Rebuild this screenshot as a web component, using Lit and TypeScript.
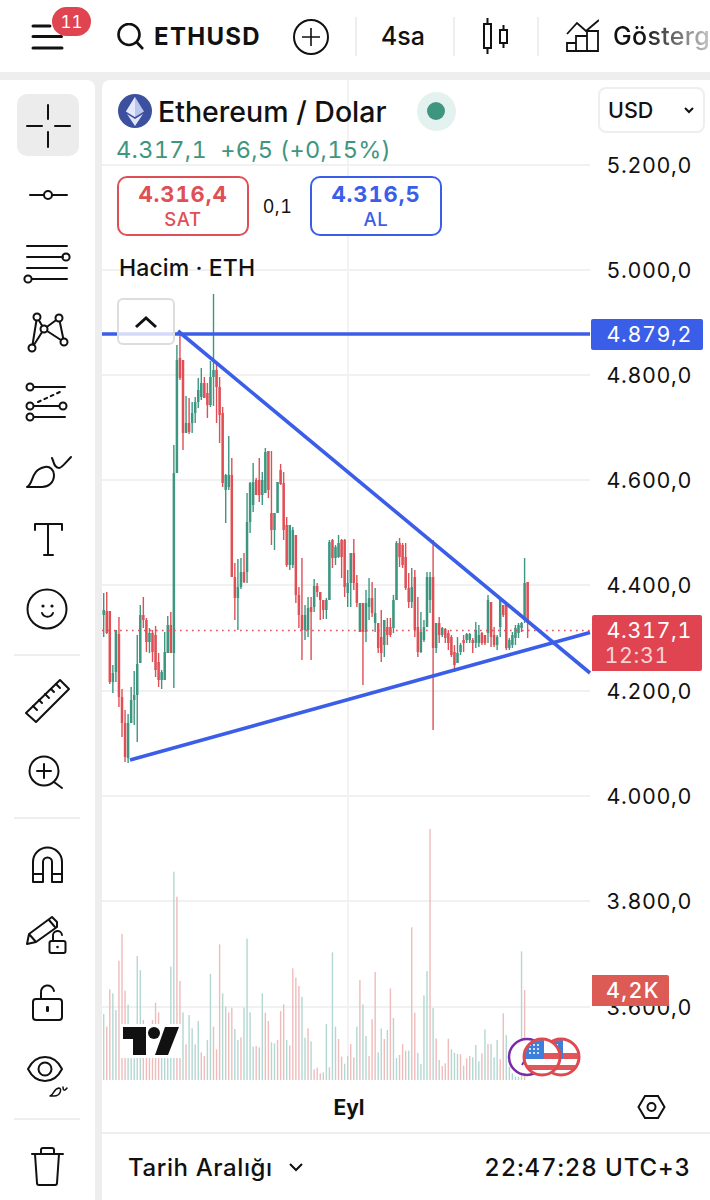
import { LitElement, html, css, svg } from "lit";
import { customElement } from "lit/decorators.js";

// [green?, high, low, bodyTop, bodyBottom] in page pixels
const C: number[][] = [
[1,593,637,610,615],[0,592,634,611,633],[0,611,684,611,682],[1,665,693,673,682],[1,630,682,630,672],[0,617,707,634,697],[0,689,737,697,723],[0,710,762,723,757],[1,714,763,723,758],[1,687,723,700,723],
[1,671,725,695,700],[1,635,742,664,695],[1,605,663,615,663],[0,597,628,615,620],[0,618,652,620,642],[1,628,653,633,642],[0,630,662,633,652],[0,626,677,635,670],[0,653,687,662,680],[1,670,689,672,680],
[1,632,680,652,680],[1,616,653,625,653],[0,612,653,625,653],[1,445,688,473,653],[1,345,473,360,473],[0,332,380,358,378],[0,360,450,360,433],[1,396,433,423,433],[0,398,434,423,432],[1,402,433,413,423],
[1,397,423,402,413],[1,378,408,390,402],[1,368,400,383,397],[0,377,398,383,398],[0,383,418,393,405],[1,361,407,377,405],[1,294,406,370,377],[0,365,423,370,387],[0,377,443,387,415],[0,407,487,413,483],
[1,474,523,475,490],[1,436,490,475,487],[0,458,577,475,577],[0,563,620,577,598],[1,559,630,587,598],[1,558,589,572,587],[0,553,583,572,582],[1,493,583,522,572],[1,482,533,483,522],[1,463,512,482,505],
[0,478,495,480,495],[0,458,502,480,495],[1,472,505,480,495],[1,448,493,452,493],[0,451,498,451,490],[0,451,545,513,530],[1,513,550,513,530],[1,482,513,482,513],[0,464,485,470,484],[0,472,540,483,530],
[0,517,567,525,565],[1,525,570,525,565],[1,527,568,530,565],[0,535,603,535,595],[0,587,628,595,615],[0,558,660,615,630],[1,605,640,615,630],[1,597,637,608,630],[0,597,660,607,612],[1,579,612,586,607],
[0,583,597,586,592],[0,592,620,592,600],[0,600,619,600,610],[1,598,619,600,610],[1,540,600,542,600],[0,539,568,540,558],[1,545,565,547,558],[1,535,558,543,557],
[0,539,578,540,557],[0,539,597,540,587],[1,570,607,583,593],[1,553,607,553,583],[0,539,590,553,583],[0,575,607,583,603],[1,603,632,603,632],[0,603,685,603,632],[1,590,642,603,632],[1,578,620,598,607],
[0,582,617,598,613],[1,588,632,613,623],[0,623,653,623,648],[0,610,662,637,653],[1,620,657,620,645],[0,618,645,627,635],[0,618,637,627,635],[1,595,633,600,628],[1,541,600,543,600],[0,538,567,543,557],
[0,543,568,545,565],[0,543,590,557,588],[0,573,608,588,602],[1,568,608,587,602],[0,570,637,577,630],[0,597,657,627,652],[1,612,653,632,652],[1,620,642,627,640],[1,572,627,577,627],[1,572,613,577,600],
[0,540,730,577,648],[1,623,653,623,648],[0,617,643,623,635],[1,627,637,628,635],[0,628,643,629,638],[0,630,650,633,643],[0,635,657,637,655],[0,645,672,652,665],[1,637,663,653,663],[1,643,655,645,652],
[0,635,652,640,643],[1,633,643,634,640],[1,633,643,634,640],[0,638,653,640,643],[1,622,648,630,643],[1,625,647,635,643],[0,632,645,633,643],[0,635,645,635,643],[1,595,643,600,633],[0,602,647,602,637],
[0,627,647,635,645],[1,635,650,637,645],[1,597,637,598,627],[0,605,617,605,615],[0,605,650,605,648],[1,638,650,640,648],[1,632,648,635,645],[1,625,645,628,638],[1,623,638,625,633],[1,622,632,623,628],
[1,558,623,583,620],[0,582,638,582,623],
];

const V1 = [582,620,508,520,570,422,342,512,554,715,715,408,450,600,620,620,600,548,577,660,660,670,440,155,230,483,577,673,585,625,673,603,697,708,660,462,620,688,373,520,560,577,563,627,660,652,563,356,577,680,678,682,520,578,603,667,670,660,573,553,660,676,445,473,498,530,653,625,664,748,743,760,757,612,742,397,620,657,710,731,708,672,712,620,480,553,648,708,598,456,697,625,657,630,505,594];
const VC1 = "grrggrrrgggggrrrrrrgggggrrgrggggrrggrrrggrrggrggggrggrrggrrrgrrrrggrgrrrggrggrrggrrgrggrrrggrgr";
const V2 = [405,372,392,392,22,278,398,432,226,153,-273,264,355,420,438,430,356,388,398,402,403,437,415,408,412,375,424,400,328,372,372,412,360,418,280,345,440,460,470,470,94,210];
const VC2 = "rrrgrrggggrgrgrrrgggrgrrgggrgrgggrrggggggr";

const VOLS: { h: number; g: boolean }[] = [];
V1.forEach((t, i) => VOLS.push({ h: (780 - t) / 3, g: (VC1[i] || "g") === "g" }));
VOLS.push({ h: 22, g: true });
V2.forEach((t, i) => VOLS.push({ h: (480 - t) / 3, g: (VC2[i] || "g") === "g" }));

const PRICES: [string, number][] = [
  ["5.200,0", 165], ["5.000,0", 270], ["4.800,0", 375], ["4.600,0", 480], ["4.400,0", 585],
  ["4.200,0", 691], ["4.000,0", 796], ["3.800,0", 901], ["3.600,0", 1007],
];

const GREEN = "#3f9680";
const RED = "#df4f56";
const BLUE = "#3b5ee8";
const xAt = (i: number) => 103.7 + 3.05 * i;

const circ = (x: number, y: number, r = 3.5) => svg`<circle cx=${x} cy=${y} r=${r} fill="#fff"></circle>`;

// Toolbar icons are drawn in page coordinates; each cell's viewBox is its own place on the page.
const TOOLS: { top: number; sel?: boolean; body: unknown }[][] = [
  [
    { top: 94, sel: true, body: svg`<path d="M48 105V119M48 132V147M27 126H42M55 126H70"></path>` },
    { top: 163, body: svg`<path d="M30 195H44M52 195H67"></path><circle cx="48" cy="195" r="4"></circle>` },
    { top: 232, body: svg`<path d="M27 246H67M27 257H63M27 268H67M32 279H67"></path><circle cx="66" cy="257" r="3.6"></circle><circle cx="28" cy="279" r="3.6"></circle>` },
    { top: 301, body: svg`<path d="M37 317L32 348M32 348L44 329M37 317L44 329M44 329L59 318M59 318L64 342M44 329L64 342"></path>${circ(37, 317)}${circ(59, 318)}${circ(44, 329)}${circ(64, 342)}${circ(32, 348)}` },
    { top: 370, body: svg`<path d="M34 387H65M34 406H59M34 417H65"></path><path d="M38 402L62 391" stroke-dasharray="3 4"></path>${circ(30, 387)}${circ(30, 406)}${circ(63, 406)}${circ(30, 417)}` },
    { top: 439, body: svg`<path d="M27 487C34 484 30 470 45 467C50 466 54 470 54 475C54 483 48 487 42 487Z"></path><path d="M52 458C54 462 54 468 59 468C62 468 66 462 71 457"></path>` },
    { top: 508, body: svg`<path d="M35 530V524H62V530M48 524V555M44 555H53"></path>` },
    { top: 577, body: svg`<circle cx="47" cy="609" r="19.5"></circle><circle class="dot" cx="43" cy="606" r="1.6"></circle><circle class="dot" cx="52" cy="606" r="1.6"></circle><path d="M42 613C44 618 51 618 53 613"></path>` },
  ],
  [
    { top: 672, body: svg`<path d="M26 714L60 681L69 690L36 723Z"></path><path d="M33 707L37 711M39 701L42 704M45 695L49 699M51 690L54 693M56 685L60 689"></path>` },
    { top: 738, body: svg`<circle cx="44" cy="769" r="14.5"></circle><path d="M54 780L62 786M37 769H51M44 762V776"></path>` },
  ],
  [
    { top: 832, body: svg`<path d="M33 880V860A14.5 14.5 0 0 1 62 860V880H52V860A4.5 4.5 0 0 0 43 860V880ZM33 872H43M52 872H62"></path>` },
    { top: 902, body: svg`<path d="M27 943L29 933L52 916L57 921L57 926L36 941ZM29 933L36 941M49 919L55 926"></path><rect x="49.5" y="940" width="16" height="12" rx="2"></rect><path d="M53 940V935A4.5 4.5 0 0 1 62 934"></path><circle class="dot" cx="57.5" cy="946" r="1.3"></circle>` },
    { top: 972, body: svg`<rect x="33" y="999" width="29" height="21" rx="3"></rect><path d="M41 999V993A6.5 6.5 0 0 1 54 991"></path><rect class="dot" x="46" y="1006" width="3" height="6" rx="1.2"></rect>` },
    { top: 1036, body: svg`<path d="M28 1064C36 1048 54 1048 62 1064C54 1080 36 1080 28 1064Z"></path><circle cx="45" cy="1064" r="6.5"></circle><path stroke-width="1.5" d="M50 1091C54 1090 53 1084 59 1083C62 1083 61 1091 54 1091ZM63 1082C63 1086 65 1086 67 1083"></path>` },
  ],
  [
    { top: 1133, body: svg`<path d="M32 1152H63M41 1152V1148Q41 1146 43 1146H52Q54 1146 54 1148V1152M35 1152L37 1181Q37 1183 39 1183H55Q57 1183 57 1181L59 1152"></path>` },
  ],
];

@customElement("app-root")
export class AppRoot extends LitElement {
  static styles = css`
    :host { display: block; width: 710px; height: 1200px; overflow: hidden; background: #eeeeee; color: #111;
      font-family: Inter, "Liberation Sans", sans-serif; font-variant-numeric: tabular-nums; }
    .header { height: 72px; background: #fff; display: flex; align-items: center; position: relative; }
    .header svg { flex: none; fill: none; stroke: #111; stroke-width: 2; }
    .menu { width: 33px; height: 26px; margin: 2px 0 0 31px; }
    .badge { position: absolute; left: 52px; top: 7px; width: 39px; height: 29px; border-radius: 15px; background: #df4450;
      color: #fff; font-size: 17px; display: flex; align-items: center; justify-content: center; }
    .search { width: 27px; height: 27px; margin-left: 53px; }
    .symbol { width: 106px; margin-left: 10px; overflow: hidden; font-weight: 700; font-size: 24px; white-space: nowrap; letter-spacing: 1.3px; }
    .plus { width: 36px; height: 36px; margin: 2px 0 0 33px; }
    .div { width: 2px; height: 39px; background: #eee; flex: none; }
    .d1 { margin-left: 26px; } .d2 { margin-left: 26px; } .d3 { margin-left: 28px; }
    .tf { margin-left: 24px; font-size: 25px; font-weight: 500; width: 46px; }
    .candles { width: 26px; height: 36px; margin-left: 28px; }
    .ind { width: 34px; height: 34px; margin-left: 26px; }
    .ind-label { margin-left: 14px; font-size: 25px; font-weight: 500; white-space: nowrap; width: 96px; overflow: hidden; letter-spacing: .3px;
      -webkit-mask-image: linear-gradient(90deg, #000 30%, rgba(0,0,0,.25) 100%); mask-image: linear-gradient(90deg, #000 30%, rgba(0,0,0,.25) 100%); }

    .body { display: flex; height: 1120px; margin-top: 8px; gap: 7px; }
    .tools { width: 95px; background: #fff; border-top-right-radius: 8px; flex: none; display: flex; flex-direction: column; padding-top: 14px; box-sizing: border-box; }
    .group { display: flex; flex-direction: column; gap: 7px; }
    .cell { width: 62px; height: 62px; margin-left: 17px; border-radius: 10px; }
    .cell.sel { background: #ececec; }
    .cell svg { display: block; fill: none; stroke: #111; stroke-width: 2; stroke-linecap: round; stroke-linejoin: round; }
    .cell svg .dot { fill: #111; stroke: none; }
    .sep { height: 2px; background: #eee; margin: 15px 15px 15px 14px; }
    .main { flex: 1; background: #fff; border-top-left-radius: 8px; display: flex; flex-direction: column; min-width: 0; }
    .chart { height: 1052px; position: relative; flex: none; overflow: hidden; }
    .chart > svg { display: block; }
    .axis { font-size: 21.5px; letter-spacing: .6px; fill: #111; text-anchor: end; }
    .wlabel { fill: #fff; font-size: 21.5px; letter-spacing: .6px; text-anchor: end; }
    .timer { fill: #f9d3d5; }
    .vlabel { font-weight: 500; letter-spacing: 1.4px; }
    .tick { font-size: 21px; font-weight: 700; text-anchor: middle; fill: #111; }
    .legend { position: absolute; left: 15px; top: 11px; }
    .title { display: flex; align-items: center; height: 40px; font-size: 28.5px; font-weight: 500; white-space: nowrap; }
    .title svg { width: 36px; height: 36px; margin-right: 5px; flex: none; }
    .live { width: 39px; height: 39px; margin-left: 30px; border-radius: 50%; background: #e3f2ee; display: flex; align-items: center; justify-content: center; }
    .live i { width: 18px; height: 18px; border-radius: 50%; background: #3f9680; display: block; }
    .quote { color: #3f9680; font-size: 23.5px; letter-spacing: .3px; margin: 1px 0 0 -1px; line-height: 36px; white-space: pre; }
    .btns { display: flex; align-items: center; margin-top: 8px; }
    .btn { width: 132px; height: 60px; box-sizing: border-box; border: 2px solid; border-radius: 10px; background: #fff; display: flex; flex-direction: column; align-items: center; justify-content: center; }
    .btn b { font-size: 22px; font-weight: 700; line-height: 26px; letter-spacing: .9px; }
    .btn span { font-size: 18.5px; font-weight: 500; line-height: 25px; letter-spacing: .6px; }
    .sell { color: #df4f56; border-color: #df4f56; } .buy { color: #3b5ee8; border-color: #3b5ee8; }
    .spread { width: 61px; text-align: center; font-size: 18px; letter-spacing: .5px; margin-left: -2px; margin-right: 2px; }
    .vol { margin-top: 17px; font-size: 23px; font-weight: 500; line-height: 30px; margin-left: 2px; white-space: nowrap; letter-spacing: .1px; }
    .collapse { position: absolute; left: 15px; top: 218px; width: 58px; height: 47px; box-sizing: border-box; border: 2px solid #ddd; border-radius: 6px;
      background: rgba(255,255,255,.78); display: flex; align-items: center; justify-content: center; }
    .collapse svg { width: 24px; height: 14px; fill: none; stroke: #111; stroke-width: 3; }
    .usd { position: absolute; left: 496px; top: 7px; width: 107px; height: 46px; box-sizing: border-box; border: 2px solid #eee; border-radius: 8px; background: #fff;
      display: flex; align-items: center; justify-content: space-between; padding: 0 8px; font-size: 21.5px; font-weight: 500; }
    .usd svg { width: 12px; height: 8px; fill: none; stroke: #111; stroke-width: 2; }
    .foot { flex: 1; border-top: 2px solid #eee; display: flex; align-items: center; justify-content: space-between; padding: 0 19px 0 26px; }
    .range { display: flex; align-items: center; font-size: 24px; font-weight: 500; gap: 15px; white-space: nowrap; letter-spacing: .6px; }
    .range svg { width: 16px; height: 10px; fill: none; stroke: #111; stroke-width: 2; }
    .clock { font-size: 24px; font-weight: 500; letter-spacing: .9px; white-space: nowrap; }
  `;

  private chart() {
    const grid = PRICES.map(([, y]) => svg`<line x1="102" x2="590" y1=${y} y2=${y} stroke="#f1f1f1" stroke-width="2"></line>`);
    const vols = VOLS.map((v, i) => svg`<rect x=${xAt(i) - 0.7} y=${1080 - v.h} width="1.4" height=${v.h} fill=${v.g ? "#b3d8d2" : "#efbcbc"}></rect>`);
    const candles = C.map((c, i) => {
      const col = c[0] ? GREEN : RED;
      const x = xAt(i);
      return svg`<rect x=${x - 0.7} y=${c[1]} width="1.4" height=${c[2] - c[1]} fill=${col}></rect><rect x=${x - 1.25} y=${c[3]} width="2.5" height=${Math.max(c[4] - c[3], 1)} fill=${col}></rect>`;
    });
    const flag = (cx: number, id: string) => svg`
      <clipPath id=${id}><circle cx=${cx} cy="1057" r="17"></circle></clipPath>
      <circle cx=${cx} cy="1057" r="17" fill="#fff"></circle>
      <g clip-path="url(#${id})">
        <rect x=${cx - 17} y="1053" width="34" height="6" fill="#e0565b"></rect>
        <rect x=${cx - 17} y="1065" width="34" height="5" fill="#e0565b"></rect>
        <rect x=${cx - 17} y="1040" width="19" height="19" fill="#3f7fdc"></rect>
        ${[1045, 1049, 1053].map((y) => [-12, -8, -4].map((dx) => svg`<circle cx=${cx + dx} cy=${y} r="1" fill="#fff"></circle>`))}
      </g>
      <circle cx=${cx} cy="1057" r="18" fill="none" stroke="#de4a50" stroke-width="3"></circle>`;
    return svg`
      <line x1="348" x2="348" y1="80" y2="1080" stroke="#f3f3f3" stroke-width="2"></line>
      ${grid}${vols}
      <g>${candles}</g>
      <line x1="102" x2="590" y1="630.5" y2="630.5" stroke=${RED} stroke-width="1.6" stroke-dasharray="1.6 4.4"></line>
      <g stroke=${BLUE} stroke-width="3.6">
        <line x1="102" x2="590" y1="334" y2="334"></line>
        <line x1="178" y1="331" x2="590" y2="673"></line>
        <line x1="130" y1="760" x2="590" y2="632.5"></line>
      </g>
      ${PRICES.map(([t, y]) => svg`<text class="axis" x="692" y=${y + 8}>${t}</text>`)}
      <rect x="591" y="319" width="112" height="31" rx="2" fill=${BLUE}></rect>
      <text class="wlabel" x="692" y="342">4.879,2</text>
      <path d="M594 615H700Q702 615 702 617V669Q702 671 700 671H592V617Q592 615 594 615Z" fill="#df4450"></path>
      <text class="wlabel" x="692" y="638">4.317,1</text>
      <text class="wlabel timer" x="669" y="663">12:31</text>
      <path d="M592 975H667Q669 975 669 977V1006H592Z" fill="#dd5b55"></path>
      <text class="wlabel vlabel" x="660" y="998">4,2K</text>
      <rect x="120" y="1024" width="62" height="34" fill="#fff"></rect>
      <path d="M123 1027H146V1055H133V1039H123ZM165 1027H179L168 1055H155Z" fill="#111"></path>
      <circle cx="154" cy="1033" r="6" fill="#111"></circle>
      <circle cx="527" cy="1057" r="18" fill="#fff" stroke="#7a2ca8" stroke-width="2.5"></circle>
      <path d="M522 1065L526 1058" stroke="#7a2ca8" stroke-width="2"></path>
      ${flag(561, "f2")}${flag(542, "f1")}
      <text class="tick" x="349" y="1115">Eyl</text>
      <path d="M645 1096H658L664.5 1107L658 1118H645L638.5 1107Z" fill="none" stroke="#111" stroke-width="2"></path>
      <circle cx="651.5" cy="1107" r="4" fill="none" stroke="#111" stroke-width="2"></circle>
    `;
  }

  render() {
    return html`
      <div class="header">
        <svg class="menu" viewBox="31 24 33 27" style="stroke-width:3.2;stroke-linecap:round"><path d="M32.5 26H50M32.5 37H62M32.5 49H62.5"></path></svg>
        <div class="badge">11</div>
        <svg class="search" viewBox="117 24 27 27" style="stroke-width:2.6"><circle cx="129" cy="35.5" r="10.5"></circle><path d="M136.5 43L143 50"></path></svg>
        <div class="symbol">ETHUSD</div>
        <svg class="plus" viewBox="0 0 36 36"><circle cx="18" cy="18" r="17"></circle><path d="M18 9V27M9 18H27" stroke-width="1.6"></path></svg>
        <div class="div d1"></div>
        <div class="tf">4sa</div>
        <div class="div d2"></div>
        <svg class="candles" viewBox="0 0 26 36"><rect x="1" y="6" width="7" height="24"></rect><rect x="17" y="12" width="7" height="13"></rect><path d="M4.5 0V6M4.5 30V36M20.5 7V12M20.5 25V30"></path></svg>
        <div class="div d3"></div>
        <svg class="ind" viewBox="566 21 34 34" style="stroke-width:1.8"><path d="M568 36L578 25L587 33L600 22"></path><path d="M568 53V45H577V53ZM577 53V38H588V53ZM588 53V33H599V53Z"></path></svg>
        <div class="ind-label">Gösterge</div>
      </div>
      <div class="body">
        <div class="tools">
          ${TOOLS.map((g, gi) => html`
            ${gi > 0 ? html`<div class="sep"></div>` : ""}
            <div class="group">
              ${g.map((t) => html`<div class="cell ${t.sel ? "sel" : ""}"><svg width="62" height="62" viewBox="17 ${t.top} 62 62">${t.body}</svg></div>`)}
            </div>`)}
        </div>
        <div class="main">
          <div class="chart">
            <svg width="608" height="1052" viewBox="102 80 608 1052">${this.chart()}</svg>
            <div class="legend">
              <div class="title">
                <svg viewBox="0 0 36 36"><circle cx="18" cy="18" r="17" fill="#3d4f9f"></circle><path d="M18 4L27 18.5L18 24L9 18.5Z" fill="#b9c6ee"></path><path d="M18 26L26 21L18 33L10 21Z" fill="#dfe6fa"></path><path d="M18 4V24L9 18.5Z" fill="#e4eafb"></path></svg>
                Ethereum / Dolar
                <div class="live"><i></i></div>
              </div>
              <div class="quote">4.317,1  +6,5 (+0,15%)</div>
              <div class="btns">
                <div class="btn sell"><b>4.316,4</b><span>SAT</span></div>
                <div class="spread">0,1</div>
                <div class="btn buy"><b>4.316,5</b><span>AL</span></div>
              </div>
              <div class="vol">Hacim · ETH</div>
            </div>
            <div class="collapse"><svg viewBox="0 0 24 14"><path d="M2 12L12 3L22 12"></path></svg></div>
            <div class="usd">USD<svg viewBox="0 0 12 8"><path d="M2 2L6 6L10 2"></path></svg></div>
          </div>
          <div class="foot">
            <div class="range">Tarih Aralığı<svg viewBox="0 0 16 10"><path d="M2 2L8 8L14 2"></path></svg></div>
            <div class="clock">22:47:28 UTC+3</div>
          </div>
        </div>
      </div>
    `;
  }
}
